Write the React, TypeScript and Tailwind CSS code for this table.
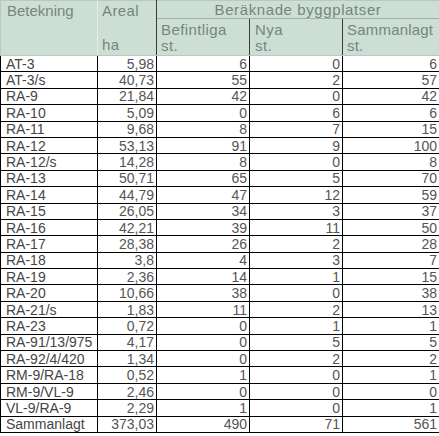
import React from 'react';

type Row = { name: string; areal: string; bef: number; nya: number; sum: number };

const rows: Row[] = [
  { name: 'AT-3', areal: '5,98', bef: 6, nya: 0, sum: 6 },
  { name: 'AT-3/s', areal: '40,73', bef: 55, nya: 2, sum: 57 },
  { name: 'RA-9', areal: '21,84', bef: 42, nya: 0, sum: 42 },
  { name: 'RA-10', areal: '5,09', bef: 0, nya: 6, sum: 6 },
  { name: 'RA-11', areal: '9,68', bef: 8, nya: 7, sum: 15 },
  { name: 'RA-12', areal: '53,13', bef: 91, nya: 9, sum: 100 },
  { name: 'RA-12/s', areal: '14,28', bef: 8, nya: 0, sum: 8 },
  { name: 'RA-13', areal: '50,71', bef: 65, nya: 5, sum: 70 },
  { name: 'RA-14', areal: '44,79', bef: 47, nya: 12, sum: 59 },
  { name: 'RA-15', areal: '26,05', bef: 34, nya: 3, sum: 37 },
  { name: 'RA-16', areal: '42,21', bef: 39, nya: 11, sum: 50 },
  { name: 'RA-17', areal: '28,38', bef: 26, nya: 2, sum: 28 },
  { name: 'RA-18', areal: '3,8', bef: 4, nya: 3, sum: 7 },
  { name: 'RA-19', areal: '2,36', bef: 14, nya: 1, sum: 15 },
  { name: 'RA-20', areal: '10,66', bef: 38, nya: 0, sum: 38 },
  { name: 'RA-21/s', areal: '1,83', bef: 11, nya: 2, sum: 13 },
  { name: 'RA-23', areal: '0,72', bef: 0, nya: 1, sum: 1 },
  { name: 'RA-91/13/975', areal: '4,17', bef: 0, nya: 5, sum: 5 },
  { name: 'RA-92/4/420', areal: '1,34', bef: 0, nya: 2, sum: 2 },
  { name: 'RM-9/RA-18', areal: '0,52', bef: 1, nya: 0, sum: 1 },
  { name: 'RM-9/VL-9', areal: '2,46', bef: 0, nya: 0, sum: 0 },
  { name: 'VL-9/RA-9', areal: '2,29', bef: 1, nya: 0, sum: 1 },
  { name: 'Sammanlagt', areal: '373,03', bef: 490, nya: 71, sum: 561 },
];

const font = { fontFamily: '"Liberation Sans", Arial, sans-serif' };

export default function App() {
  return (
    <div className="w-[439px] h-[436px] bg-white" style={font}>
      <table className="border-collapse table-fixed w-[439px] text-[14px]">
        <colgroup>
          <col className="w-[97px]" />
          <col className="w-[59px]" />
          <col className="w-[93px]" />
          <col className="w-[93px]" />
          <col className="w-[97px]" />
        </colgroup>
        <thead className="bg-[#cddfd5] text-[#76857e] text-[15px] tracking-[0.4px]">
          <tr className="h-[18px]">
            <th rowSpan={2} className="border border-[#b9c9c0] border-r-[#e4ece7] align-top text-left font-normal pl-[6px] pt-[1px] leading-[17px] tracking-[0px]">
              Betekning
            </th>
            <th rowSpan={2} className="border border-[#b9c9c0] border-r-[#3a3a3a] align-top text-left font-normal pl-[4px] pt-[1px] leading-[17px]">
              Areal
              <br />
              <br />
              ha
            </th>
            <th colSpan={3} className="border border-[#b9c9c0] border-b-[#9fb0a6] text-center font-normal leading-[16px] tracking-[0.6px]">
              Beräknade byggplatser
            </th>
          </tr>
          <tr className="h-[37px]">
            <th className="border border-[#b9c9c0] border-r-[#3a3a3a] align-top text-left font-normal pl-[4px] pt-[3px] leading-[16px]">
              Befintliga
              <br />
              st.
            </th>
            <th className="border border-[#b9c9c0] border-r-[#3a3a3a] align-top text-left font-normal pl-[5px] pt-[3px] leading-[16px]">
              Nya
              <br />
              st.
            </th>
            <th className="border border-[#b9c9c0] align-top text-left font-normal pl-[4px] pt-[3px] leading-[16px] tracking-[0.2px]">
              Sammanlagt
              <br />
              st.
            </th>
          </tr>
        </thead>
        <tbody className="text-[#454545]">
          {rows.map((r) => (
            <tr key={r.name} className="h-[16.4px]">
              <td className="border border-black pl-[5px] leading-[14px] whitespace-nowrap">{r.name}</td>
              <td className="border border-black text-right pr-[2px] leading-[14px] text-[#555]">{r.areal}</td>
              <td className="border border-black text-right pr-[2px] leading-[14px] text-[#555]">{r.bef}</td>
              <td className="border border-black text-right pr-[2px] leading-[14px] text-[#555]">{r.nya}</td>
              <td className="border border-black text-right pr-[2px] leading-[14px] text-[#555]">{r.sum}</td>
            </tr>
          ))}
        </tbody>
      </table>
    </div>
  );
}
